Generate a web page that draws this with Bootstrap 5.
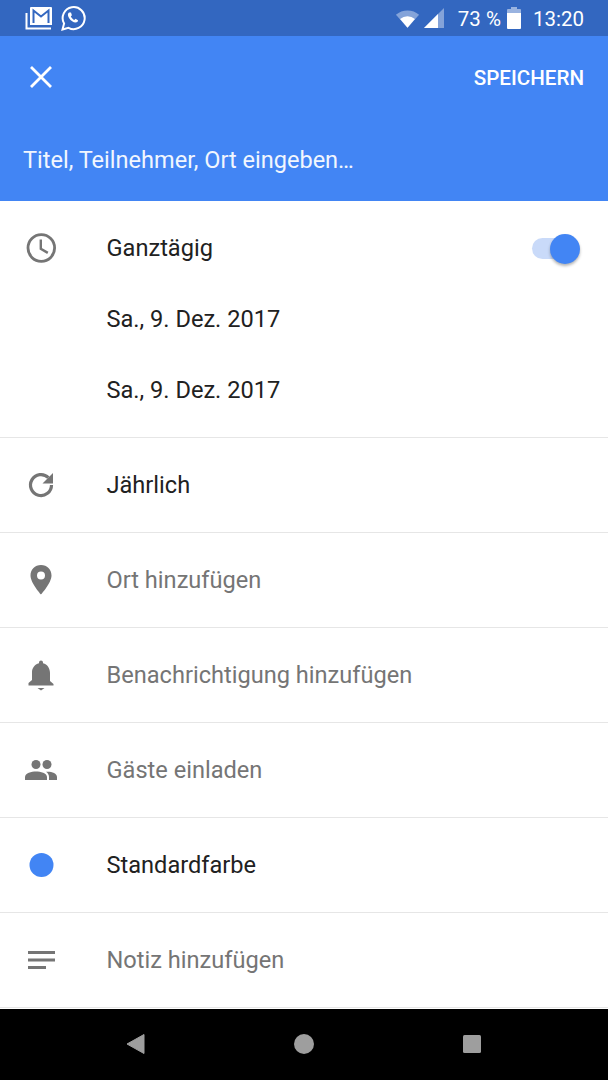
<!DOCTYPE html>
<html>
<head>
  <title>Termin</title>
  <link rel="stylesheet" href="https://cdn.jsdelivr.net/npm/bootstrap@5.3.3/dist/css/bootstrap.min.css">
  <style>
    body { font-family: Roboto, sans-serif; background: #fff; width: 608px; height: 1080px; overflow: hidden; }
    .status-strip { height: 36px; background: #3367c0; color: #fff; padding: 0 24px 0 25px; font-size: 20.5px; }
    .status-val { padding-top: 2px; }
    .status-pct { margin: 0 2px 0 14px; }
    .head-area { height: 165px; background: #4285f4; color: #fff; padding: 0 24px; }
    .head-top { height: 82px; }
    .save-txt { font-size: 20.6px; font-weight: 500; padding-top: 3px; }
    .title-txt { font-size: 23.55px; margin-top: 25px; margin-left: -1px; color: #f1f6fe; }
    .allday { height: 237px; padding-top: 11px; border-bottom: 1px solid #e6e6e6; }
    .line-row { height: 71px; }
    .item-row { height: 95px; border-bottom: 1px solid #e6e6e6; }
    .icon-slot { width: 107px; flex: none; padding-left: 24px; margin-right: -.5px; }
    .item-txt { font-size: 23.6px; color: #212121; padding-top: 2px; }
    .muted-txt { color: #757575; }
    .toggle-track { width: 47px; height: 21px; border-radius: 11px; background: #c9daf9; position: relative; margin-right: 29px; margin-top: 2px; }
    .toggle-knob { width: 30px; height: 30px; border-radius: 50%; background: #4285f4; position: absolute; right: -1px; top: -4px; box-shadow: 0 2px 3px rgba(0,0,0,.3); }
    .nav-strip { height: 71px; margin-top: 1px; background: #000; }
    .nav-strip svg { position: absolute; }
    .nav-inner { position: relative; height: 71px; }
    .back-key { left: 126px; top: 24px; }
    .home-key { left: 293px; top: 24px; }
    .recent-key { left: 462px; top: 25px; }
  </style>
</head>
<body>
  <div class="status-strip d-flex align-items-center justify-content-between">
    <div class="d-flex align-items-center gap-2">
      <svg width="27" height="23" viewBox="0 0 27 23"><path d="M1.500 6v15.500H26" fill="none" stroke="#fff" stroke-width="2"/><path d="M5 0h21a1 1 0 0 1 1 1v17H5V1a1 1 0 0 1 1-1z" fill="#fff"/><path d="M8.500 16V3.500l7.500 6 7.500-6V16" fill="none" stroke="#3367c0" stroke-width="2"/></svg>
      <svg width="26" height="26" viewBox="0 0 26 26"><path d="M2.500 24.500l1.600-6A11 11 0 1 1 8.500 22.800z" fill="none" stroke="#fff" stroke-width="2"/><path d="M9 7.500c-1.500 1-1.500 3 0 5.500 1.800 2.800 4.500 4.500 6.500 4.500 1.500 0 2.500-1 2.500-2.300l-2.500-1.400-1.200 1.200c-1.300-.6-2.800-2-3.500-3.500l1.100-1.200L11 7.500z" fill="#fff"/></svg>
    </div>
    <div class="d-flex align-items-center">
      <svg width="25" height="19" viewBox="0 0 27 20"><path d="M1 6a19 19 0 0 1 25 0L13.500 20z" fill="#fff" opacity=".4"/><path d="M5.500 10.500a12.500 12.500 0 0 1 16 0L13.500 20z" fill="#fff"/></svg>
      <svg class="ms-1" width="20" height="20" viewBox="0 0 20 20"><path d="M0 20L20 0v20z" fill="#fff" opacity=".4"/><path d="M0 20L14 6v14z" fill="#fff"/></svg>
      <span class="status-val status-pct">73 %</span>
      <svg class="ms-1" width="14" height="22" viewBox="0 0 14 22"><path d="M4 2V0h6v2h3a1 1 0 0 1 1 1v3H0V3a1 1 0 0 1 1-1z" fill="#fff" opacity=".5"/><path d="M0 6h14v15a1 1 0 0 1-1 1H1a1 1 0 0 1-1-1z" fill="#fff"/></svg>
      <span class="status-val ms-2 ps-1">13:20</span>
    </div>
  </div>

  <div class="head-area">
    <div class="head-top d-flex align-items-center justify-content-between">
      <svg width="34" height="34" viewBox="0 0 34 34"><path d="M7 7l20 20M27 7L7 27" stroke="#fff" stroke-width="2.800" fill="none"/></svg>
      <span class="save-txt">SPEICHERN</span>
    </div>
    <div class="title-txt">Titel, Teilnehmer, Ort eingeben…</div>
  </div>

  <div class="allday">
    <div class="line-row d-flex align-items-center">
      <div class="icon-slot">
        <svg width="34" height="34" viewBox="0 0 34 34"><circle cx="17.300" cy="17" r="13.300" fill="none" stroke="#757575" stroke-width="2.800"/><path d="M16.800 8.500v9.200l7 4.200" fill="none" stroke="#757575" stroke-width="2.400"/></svg>
      </div>
      <span class="item-txt flex-grow-1">Ganztägig</span>
      <div class="toggle-track"><div class="toggle-knob"></div></div>
    </div>
    <div class="line-row d-flex align-items-center">
      <div class="icon-slot"></div>
      <span class="item-txt">Sa., 9. Dez. 2017</span>
    </div>
    <div class="line-row d-flex align-items-center">
      <div class="icon-slot"></div>
      <span class="item-txt">Sa., 9. Dez. 2017</span>
    </div>
  </div>

  <div class="item-row d-flex align-items-center">
    <div class="icon-slot">
      <svg width="34" height="34" viewBox="0 0 34 34"><path d="M27.500 17a10.500 10.500 0 1 1-3.100-7.400" fill="none" stroke="#757575" stroke-width="3.200"/><path d="M29 5v10.500H18.500z" fill="#757575"/></svg>
    </div>
    <span class="item-txt">Jährlich</span>
  </div>
  <div class="item-row d-flex align-items-center">
    <div class="icon-slot">
      <svg width="34" height="34" viewBox="0 0 34 34"><path fill-rule="evenodd" d="M17 2C10.900 2 6.500 6.500 6.500 12.500 6.500 20 17 31.500 17 31.500S27.500 20 27.500 12.500C27.500 6.500 23.100 2 17 2zm0 6.500a4 4 0 1 1 0 8 4 4 0 0 1 0-8z" fill="#757575"/></svg>
    </div>
    <span class="item-txt muted-txt">Ort hinzufügen</span>
  </div>
  <div class="item-row d-flex align-items-center">
    <div class="icon-slot">
      <svg width="34" height="34" viewBox="0 0 34 34"><path d="M17 2.500a2 2 0 0 1 2 2v.700c4.500 1.200 7 5 7 9.800v8l3.500 3v1.500h-25V25l3.500-3v-8C8 10.200 10.500 6.400 15 5.200v-.700a2 2 0 0 1 2-2zM13.500 30h7L17 32.500z" fill="#757575"/></svg>
    </div>
    <span class="item-txt muted-txt">Benachrichtigung hinzufügen</span>
  </div>
  <div class="item-row d-flex align-items-center">
    <div class="icon-slot">
      <svg width="34" height="34" viewBox="0 0 34 34"><circle cx="12" cy="11.500" r="4.500" fill="#757575"/><circle cx="23" cy="11.500" r="4.500" fill="#757575"/><path d="M1 27v-3c0-3.800 6.500-5.500 11-5.500S23 20.200 23 24v3z" fill="#757575"/><path d="M25 27v-3c0-2-1-3.800-3-5.200 5-.5 11 1.300 11 5.200v3z" fill="#757575"/></svg>
    </div>
    <span class="item-txt muted-txt">Gäste einladen</span>
  </div>
  <div class="item-row d-flex align-items-center">
    <div class="icon-slot">
      <svg width="34" height="34" viewBox="0 0 34 34"><circle cx="17.500" cy="17" r="12" fill="#4285f4"/></svg>
    </div>
    <span class="item-txt">Standardfarbe</span>
  </div>
  <div class="item-row d-flex align-items-center">
    <div class="icon-slot">
      <svg width="34" height="34" viewBox="0 0 34 34"><path d="M4 9.500h27M4 17h27M4 24.500h18" stroke="#757575" stroke-width="3" fill="none"/></svg>
    </div>
    <span class="item-txt muted-txt">Notiz hinzufügen</span>
  </div>

  <div class="nav-strip">
    <div class="nav-inner">
      <svg class="back-key" width="20" height="22" viewBox="0 0 20 22"><path d="M18 1.500v19L1 11z" fill="#9e9e9e" stroke="#9e9e9e" stroke-linejoin="round"/></svg>
      <svg class="home-key" width="22" height="22" viewBox="0 0 22 22"><circle cx="11" cy="11" r="10" fill="#9e9e9e"/></svg>
      <svg class="recent-key" width="20" height="20" viewBox="0 0 20 20"><rect x="1" y="1" width="18" height="18" rx="1.500" fill="#9e9e9e"/></svg>
    </div>
  </div>
</body>
</html>
